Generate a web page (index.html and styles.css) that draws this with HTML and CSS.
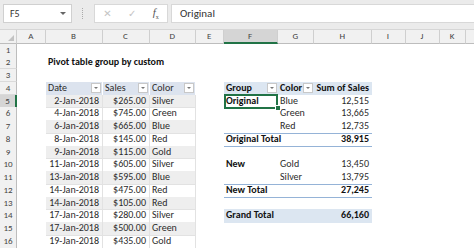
FILE: index.html
```html
<html>
<head>
<meta http-equiv="Content-Type" content="text/html;charset=UTF-8"><title>Pivot table group by custom</title>
<link rel="stylesheet" href="styles.css">
</head>
<body>

<div class="toolbar">
  <div class="namebox">F5<span class="caret"></span></div>
  <div class="grip"></div>
  <div class="fxbox">
    <span class="fxbtn">&#x2715;</span>
    <span class="fxbtn">&#x2713;</span>
    <span class="fxbtn fx"><i>f</i><sub>x</sub></span>
  </div>
  <div class="formula">Original</div>
</div>

<div class="sheet">
  <div class="row colhead">
    <div class="corner"></div>
    <div class="ch">A</div><div class="ch">B</div><div class="ch">C</div><div class="ch">D</div><div class="ch">E</div>
    <div class="ch sel">F</div><div class="ch">G</div><div class="ch">H</div><div class="ch">I</div><div class="ch">J</div><div class="ch">K</div><div class="ch last"></div>
  </div>

  <div class="row"><div class="rh">1</div></div>
  <div class="row"><div class="rh">2</div><div></div><div class="c title">Pivot table group by custom</div></div>
  <div class="row"><div class="rh">3</div></div>

  <div class="row">
    <div class="rh">4</div><div></div>
    <div class="c th">Date<span class="dd"></span></div>
    <div class="c th">Sales<span class="dd"></span></div>
    <div class="c th">Color<span class="dd"></span></div>
    <div></div>
    <div class="c ph b">Group<span class="dd"></span></div>
    <div class="c ph b">Color<span class="dd"></span></div>
    <div class="c ph b">Sum of Sales</div>
  </div>

  <div class="row">
    <div class="rh sel">5</div><div></div>
    <div class="c td band r">2-Jan-2018</div><div class="c td band r">$265.00</div><div class="c td band">Silver</div>
    <div></div>
    <div class="c b active">Original<span class="handle"></span></div><div class="c">Blue</div><div class="c r">12,515</div>
  </div>
  <div class="row">
    <div class="rh">6</div><div></div>
    <div class="c td r">4-Jan-2018</div><div class="c td r">$745.00</div><div class="c td">Green</div>
    <div></div>
    <div class="c"></div><div class="c">Green</div><div class="c r">13,665</div>
  </div>
  <div class="row">
    <div class="rh">7</div><div></div>
    <div class="c td band r">6-Jan-2018</div><div class="c td band r">$665.00</div><div class="c td band">Blue</div>
    <div></div>
    <div class="c"></div><div class="c">Red</div><div class="c r">12,735</div>
  </div>
  <div class="row">
    <div class="rh">8</div><div></div>
    <div class="c td r">8-Jan-2018</div><div class="c td r">$145.00</div><div class="c td">Red</div>
    <div></div>
    <div class="c b sub">Original Total</div><div class="c sub"></div><div class="c b r sub">38,915</div>
  </div>
  <div class="row">
    <div class="rh">9</div><div></div>
    <div class="c td band r">9-Jan-2018</div><div class="c td band r">$115.00</div><div class="c td band">Gold</div>
  </div>
  <div class="row">
    <div class="rh">10</div><div></div>
    <div class="c td r">11-Jan-2018</div><div class="c td r">$605.00</div><div class="c td">Silver</div>
    <div></div>
    <div class="c b">New</div><div class="c">Gold</div><div class="c r">13,450</div>
  </div>
  <div class="row">
    <div class="rh">11</div><div></div>
    <div class="c td band r">13-Jan-2018</div><div class="c td band r">$595.00</div><div class="c td band">Blue</div>
    <div></div>
    <div class="c"></div><div class="c">Silver</div><div class="c r">13,795</div>
  </div>
  <div class="row">
    <div class="rh">12</div><div></div>
    <div class="c td r">14-Jan-2018</div><div class="c td r">$475.00</div><div class="c td">Red</div>
    <div></div>
    <div class="c b sub">New Total</div><div class="c sub"></div><div class="c b r sub">27,245</div>
  </div>
  <div class="row">
    <div class="rh">13</div><div></div>
    <div class="c td band r">14-Jan-2018</div><div class="c td band r">$105.00</div><div class="c td band">Red</div>
  </div>
  <div class="row">
    <div class="rh">14</div><div></div>
    <div class="c td r">17-Jan-2018</div><div class="c td r">$280.00</div><div class="c td">Silver</div>
    <div></div>
    <div class="c b grand">Grand Total</div><div class="c grand"></div><div class="c b r grand">66,160</div>
  </div>
  <div class="row">
    <div class="rh">15</div><div></div>
    <div class="c td band r">17-Jan-2018</div><div class="c td band r">$500.00</div><div class="c td band">Green</div>
  </div>
  <div class="row">
    <div class="rh">16</div><div></div>
    <div class="c td r">19-Jan-2018</div><div class="c td r">$435.00</div><div class="c td">Gold</div>
  </div>
</div>

</body>
</html>
```

FILE: styles.css
```css
body {
    margin: 0;
    padding: 0;
    background-color: #fff;
    font-family: Carlito, Lato, "Liberation Sans", sans-serif;
    font-size: 10px;
    color: #222;
    overflow: hidden;
}

/* formula bar */
.toolbar {
    height: 30px;
    background-color: #ebebeb;
    display: flex;
    align-items: center;
    padding: 0 0 2px 3px;
    box-sizing: border-box;
    border-bottom: 1px solid #d6d6d6;
}
.namebox {
    width: 69px;
    height: 19px;
    background-color: #fff;
    border: 1px solid #d0d0d0;
    box-sizing: border-box;
    display: flex;
    align-items: center;
    padding-left: 6px;
    font-size: 10px;
    color: #333;
    position: relative;
}
.caret {
    position: absolute;
    right: 5px;
    top: 7px;
    border-left: 3px solid transparent;
    border-right: 3px solid transparent;
    border-top: 3px solid #666;
}
.grip {
    width: 1px;
    height: 11px;
    margin: 0 10px 0 10px;
    border-left: 1px dotted #aaa;
}
.fxbox {
    width: 74px;
    height: 19px;
    background-color: #fff;
    border: 1px solid #d8d8d8;
    box-sizing: border-box;
    display: flex;
    align-items: center;
    justify-content: space-around;
    color: #c4c4c4;
    font-size: 10px;
    font-family: "DejaVu Sans", sans-serif;
}
.fx {
    color: #555;
    font-family: "Liberation Serif", serif;
    font-size: 11px;
}
.fx sub { font-size: 6px; }
.formula {
    flex: 1;
    height: 19px;
    margin-left: 3px;
    background-color: #fff;
    border: 1px solid #d8d8d8;
    border-right: 0;
    box-sizing: border-box;
    padding-left: 8px;
    display: flex;
    align-items: center;
    font-size: 11px;
    color: #333;
}

/* sheet grid */
.row {
    display: grid;
    grid-template-columns: 17px 28.5px 57px 47px 46.5px 27.5px 54px 36.5px 57.5px 34px 34px 26px 1fr;
    height: 12.75px;
}
.colhead {
    height: 13.5px;
}
.corner, .ch {
    background-color: #f1f1f1;
    border-right: 1px solid #cfcfcf;
    border-bottom: 1px solid #bdbdbd;
    box-sizing: border-box;
    font-size: 9px;
    color: #444;
    text-align: center;
    line-height: 12px;
}
.corner {
    position: relative;
}
.corner:after {
    content: "";
    position: absolute;
    right: 2px;
    bottom: 2px;
    border-left: 6px solid transparent;
    border-bottom: 6px solid #c2c2c2;
}
.ch.sel {
    background-color: #d5d5d5;
    border-bottom: 2px solid #217346;
}
.ch.last { border-right: 0; }

.rh {
    background-color: #f1f1f1;
    border-right: 1px solid #bdbdbd;
    border-bottom: 1px solid #dadada;
    box-sizing: border-box;
    font-size: 9px;
    color: #444;
    text-align: center;
    line-height: 12px;
}
.rh.sel {
    background-color: #d5d5d5;
    border-right: 2px solid #217346;
}

.c {
    white-space: nowrap;
    line-height: 12.75px;
    padding: 0 2.5px;
    box-sizing: border-box;
    position: relative;
    color: #2b2b2b;
}
.r { text-align: right; }
.b { font-weight: bold; color: #111; }
.title { font-weight: bold; color: #111; }

/* data table */
.th {
    background-color: #dce3ee;
    border-right: 1px solid #fff;
}
.td {
    border-right: 1px solid #e2e2e2;
    border-bottom: 1px solid #e2e2e2;
}
.band { background-color: #eeeeee; }
.dd {
    position: absolute;
    right: 1px;
    top: 1px;
    width: 10px;
    height: 10px;
    box-sizing: border-box;
    background-color: #fff;
    border: 1px solid #c8c8c8;
}
.dd:after {
    content: "";
    position: absolute;
    left: 2px;
    top: 3px;
    border-left: 2px solid transparent;
    border-right: 2px solid transparent;
    border-top: 2px solid #777;
}

/* pivot table */
.ph { background-color: #dce6f1; }
.active:after {
    content: "";
    position: absolute;
    left: 0;
    top: -0.5px;
    right: 0;
    bottom: -0.5px;
    border: 2px solid #217346;
}
.handle {
    position: absolute;
    right: -3px;
    bottom: -3px;
    width: 4px;
    height: 4px;
    background-color: #217346;
    border: 1px solid #fff;
    z-index: 1;
}
.sub {
    border-top: 1px solid #95b3d7;
    border-bottom: 1px solid #95b3d7;
    line-height: 10.75px;
}
.grand {
    background-color: #dce6f1;
}
```
